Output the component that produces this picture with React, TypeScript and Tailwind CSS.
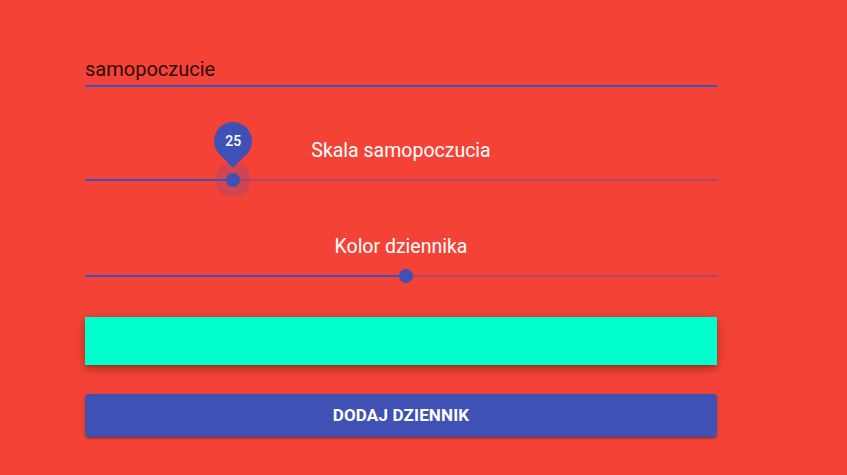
import React from 'react';

const font = { fontFamily: 'Roboto, "Liberation Sans", sans-serif' };

function Slider({ label, value, active }: { label: string; value: number; active?: boolean }) {
  return (
    <div className="flex flex-col gap-[2px]">
      <div className="text-center text-[19.5px] leading-[24px] text-white">{label}</div>
      <div className="flex h-[30px] items-center">
        <div className="relative flex h-[2px] w-full">
          <div className="h-full bg-[#3f51b5]" style={{ width: `${value}%` }} />
          <div className="h-full flex-1 bg-[#3f51b5]/40" />
          {active && (
            <div
              className="absolute top-1/2 h-[32px] w-[33px] -translate-x-1/2 -translate-y-1/2 rounded-[11px] bg-[#3f51b5]/20"
              style={{ left: `${value}%` }}
            />
          )}
          <div
            className="absolute top-1/2 h-[14px] w-[14px] -translate-x-1/2 -translate-y-1/2 rounded-full bg-[#3f51b5]"
            style={{ left: `${value}%` }}
          />
          {active && (
            <div className="absolute bottom-[21px] -translate-x-1/2" style={{ left: `${value}%` }}>
              <div className="flex h-[38px] w-[38px] -rotate-45 items-center justify-center rounded-tl-full rounded-tr-full rounded-br-full bg-[#3f51b5]">
                <span className="rotate-45 text-[14px] font-medium text-white">25</span>
              </div>
            </div>
          )}
        </div>
      </div>
    </div>
  );
}

export default function App() {
  return (
    <div className="min-h-screen w-full bg-[#f44336]" style={font}>
      <div className="ml-[85px] flex w-[632px] flex-col pt-[57px]">
        <div className="border-b-2 border-[#3f51b5] pb-[4px] text-[20px] leading-[24px] text-black/85">
          samopoczucie
        </div>

        <div className="mt-[52px]">
          <Slider label="Skala samopoczucia" value={23.4} active />
        </div>

        <div className="mt-[40px]">
          <Slider label="Kolor dziennika" value={50.8} />
        </div>

        <div className="mt-[26px] h-[48px] bg-[#00ffcc] shadow-[0_3px_5px_-1px_rgba(0,0,0,0.2),0_5px_8px_0_rgba(0,0,0,0.14),0_1px_14px_0_rgba(0,0,0,0.12)]" />

        <button className="mt-[29px] flex h-[43px] w-full items-center justify-center rounded-[4px] bg-[#3f51b5] text-[17px] font-bold tracking-[0.01em] text-white shadow-[0_3px_1px_-2px_rgba(0,0,0,0.2),0_2px_2px_0_rgba(0,0,0,0.14),0_1px_5px_0_rgba(0,0,0,0.12)]">
          DODAJ DZIENNIK
        </button>
      </div>
    </div>
  );
}
